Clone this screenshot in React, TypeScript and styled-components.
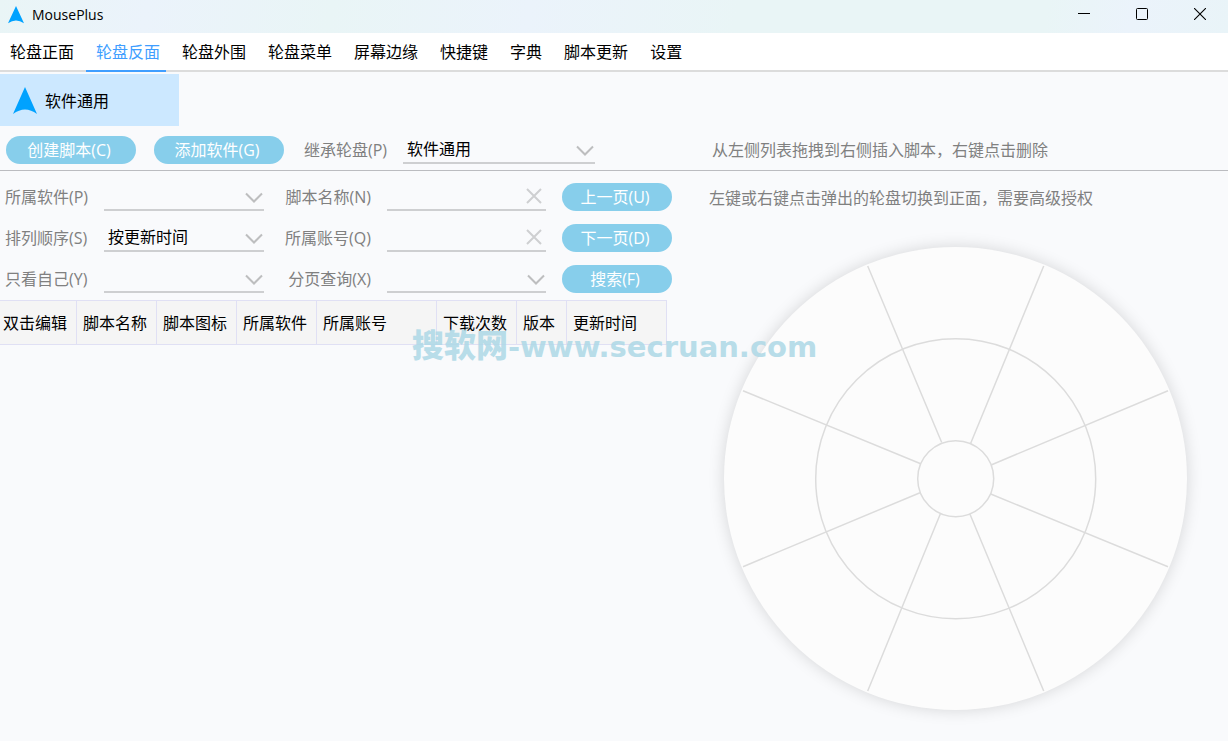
import React from "react";
import styled, { createGlobalStyle } from "styled-components";

const GlobalStyle = createGlobalStyle`
  *, *::before, *::after { box-sizing: border-box; }
  body {
    margin: 0;
    background: #f9fafc;
    color: #000;
    font-family: "Open Sans", "Noto Sans CJK SC", sans-serif;
    font-size: 16px;
    font-weight: 400;
    line-height: 24px;
  }
  button, input, select { font: inherit; color: inherit; }
`;

const Window = styled.div`
  position: relative;
  min-height: 100vh;
  display: flex;
  flex-direction: column;
  overflow: hidden;
`;

const TitleBar = styled.header`
  display: flex;
  align-items: center;
  justify-content: space-between;
  height: 33px;
  background: linear-gradient(100deg, #e9f5f6, #ebf3fb 12%, #e9f5f6 27%, #ebf3fb 43%, #e9f5f6 60%, #e9f5f6 85%, #ebf3fb 92%, #e9f4f8);
`;

const AppName = styled.h1`
  display: flex;
  align-items: center;
  gap: 8px;
  margin: 0;
  padding: 0 0 4px 8px;
  font-size: 14px;
  font-weight: 400;
`;

const WindowControls = styled.div`
  display: flex;
  gap: 2px;
`;

const ControlButton = styled.button`
  display: flex;
  align-items: center;
  justify-content: center;
  width: 56px;
  height: 33px;
  padding: 0 0 5px;
  border: 0;
  background: none;
`;

const Tabs = styled.nav`
  display: flex;
  gap: 6px;
  height: 39px;
  background: #fff;
  box-shadow: inset 0 -2px #dcdcdc;
`;

const Tab = styled.a<{ $active?: boolean }>`
  padding: 7px 6px 0 10px;
  border-bottom: 2px solid ${(p) => (p.$active ? "#409eff" : "transparent")};
  color: ${(p) => (p.$active ? "#409eff" : "#000")};
  text-decoration: none;
  white-space: nowrap;
`;

const SoftwareList = styled.div`
  display: flex;
  padding-top: 2px;
`;

const SoftwareItem = styled.button`
  display: flex;
  align-items: center;
  gap: 8px;
  width: 179px;
  height: 52px;
  padding: 2px 0 0 13px;
  border: 0;
  background: #cce8ff;
`;

const Toolbar = styled.div`
  display: flex;
  align-items: center;
  height: 45px;
  padding: 4px 0 0 6px;
  border-bottom: 1px solid #bbbcc0;
`;

const ToolbarMain = styled.div`
  display: flex;
  flex: 0 0 auto;
  align-items: center;
  gap: 18px;
  width: 706px;
`;

const PillButton = styled.button<{ $width: number }>`
  width: ${(p) => p.$width}px;
  height: 28px;
  padding: 0 4px 0 0;
  border: 0;
  border-radius: 14px;
  background: #87ceeb;
  color: #fff;
  line-height: 28px;
  white-space: nowrap;
`;

const Label = styled.label`
  color: #808080;
  white-space: nowrap;
`;

const LabelledField = styled.div`
  display: flex;
  align-items: center;
  gap: 16px;
  padding-left: 2px;
`;

const FieldFrame = styled.div<{ $width?: number }>`
  display: flex;
  align-items: center;
  width: ${(p) => (p.$width ? `${p.$width}px` : "100%")};
  height: 28px;
  border-bottom: 2px solid #cecfd1;
`;

const SelectFrame = styled(FieldFrame)`
  display: grid;
  grid-template-columns: 1fr 19px;

  svg {
    grid-area: 1 / 2;
    margin-top: 4px;
    pointer-events: none;
  }
`;

const SelectBox = styled.select`
  grid-area: 1 / 1 / 2 / 3;
  width: 100%;
  height: 26px;
  padding: 0 20px 0 4px;
  border: 0;
  outline: 0;
  background: none;
  appearance: none;
`;

const TextInput = styled.input`
  flex: 1;
  min-width: 0;
  height: 26px;
  padding: 0 4px;
  border: 0;
  outline: 0;
  background: none;
`;

const ClearButton = styled.button`
  display: flex;
  padding: 0 4px 0 0;
  border: 0;
  background: none;
`;

const Content = styled.main`
  display: flex;
  flex: 1;
`;

const ScriptPanel = styled.section`
  flex: 0 0 683px;
`;

const FilterForm = styled.form`
  display: grid;
  grid-template-columns: 99px 160px 107px 16px 159px 16px 110px;
  row-gap: 13px;
  align-items: center;
  padding: 12px 0 7px 5px;

  > :nth-child(5n + 4) { grid-column: 5; }
  > :nth-child(5n + 5) { grid-column: 7; }
`;

const FilterLabel = styled(Label)<{ $end?: boolean }>`
  justify-self: ${(p) => (p.$end ? "end" : "start")};
`;

const ScriptTable = styled.table`
  width: 667px;
  border-collapse: separate;
  border-spacing: 0;
  table-layout: fixed;
`;

const HeadCell = styled.th<{ $width: number }>`
  width: ${(p) => p.$width}px;
  height: 45px;
  padding: 0 0 0 6px;
  border: 1px solid #e0e0f4;
  border-left: 0;
  background: #f5f5f5;
  font-weight: 400;
  text-align: left;
  white-space: nowrap;

  &:first-child { padding-left: 3px; }
`;

const WheelPanel = styled.section`
  display: flex;
  flex: 1;
  flex-direction: column;
  padding-top: 15px;
`;

const Hint = styled.p`
  margin: 0;
  color: #808080;
  white-space: nowrap;
`;

const WheelHint = styled(Hint)`
  padding-left: 26px;
`;

const Wheel = styled.svg`
  flex: none;
  align-self: center;
  width: 463px;
  height: 463px;
  margin: 37px 0 30px;
  border-radius: 50%;
  background: #fcfcfc;
  box-shadow: 0 0 16px rgba(0, 0, 0, 0.15);
`;

const Watermark = styled.div`
  position: absolute;
  top: 323px;
  left: 412px;
  color: #add8e6;
  opacity: 0.85;
  font: 700 29px/40px "DejaVu Sans", sans-serif;
  white-space: nowrap;
  pointer-events: none;
`;

const WatermarkName = styled.span`
  font: 900 32px/40px "Noto Sans CJK SC", sans-serif;
`;

const Arrow = ({ width, height }: { width: number; height: number }) => (
  <svg width={width} height={height} viewBox="0 0 22 28" preserveAspectRatio="none" aria-hidden="true">
    <path d="M11 0 L22 27 Q11 18 0 27 Z" fill="#00a2ff" />
  </svg>
);

const Chevron = () => (
  <svg width="18" height="12" viewBox="0 0 18 12" fill="none" stroke="#bdbebf" strokeWidth="2" aria-hidden="true">
    <path d="M1 1.5 L9 9.5 L17 1.5" />
  </svg>
);

const Cross = () => (
  <svg width="16" height="16" viewBox="0 0 16 16" fill="none" stroke="#cecfd1" strokeWidth="2" aria-hidden="true">
    <path d="M1 1 L15 15 M15 1 L1 15" />
  </svg>
);

const Select = ({ id, value = "", width }: { id: string; value?: string; width?: number }) => (
  <SelectFrame $width={width}>
    <SelectBox id={id} defaultValue={value}>
      <option value={value}>{value}</option>
    </SelectBox>
    <Chevron />
  </SelectFrame>
);

const ClearableInput = ({ id }: { id: string }) => (
  <FieldFrame>
    <TextInput id={id} type="text" />
    <ClearButton type="button" aria-label="清除">
      <Cross />
    </ClearButton>
  </FieldFrame>
);

const tabs = ["轮盘正面", "轮盘反面", "轮盘外围", "轮盘菜单", "屏幕边缘", "快捷键", "字典", "脚本更新", "设置"];

const columns = [
  { title: "双击编辑", width: 77 },
  { title: "脚本名称", width: 80 },
  { title: "脚本图标", width: 80 },
  { title: "所属软件", width: 80 },
  { title: "所属账号", width: 120 },
  { title: "下载次数", width: 80 },
  { title: "版本", width: 50 },
  { title: "更新时间", width: 100 },
];

const spokes =
  "M157.7 36 L231.7 212.5 M333.7 36 L260.7 213.3 M458 160.7 L281.7 234.7 M458 336.7 L280.7 264 " +
  "M333.7 461 L260 284.3 M157.7 461 L230.3 284 M33 336.7 L210 262.7 M33 160.7 L210.7 233.7";

export default function App() {
  return (
    <Window>
      <GlobalStyle />
      <TitleBar>
        <AppName>
          <Arrow width={16} height={18} />
          MousePlus
        </AppName>
        <WindowControls>
          <ControlButton aria-label="最小化">
            <svg width="12" height="12" viewBox="0 0 12 12" stroke="#000">
              <path d="M0 5.5 H12" />
            </svg>
          </ControlButton>
          <ControlButton aria-label="最大化">
            <svg width="12" height="12" viewBox="0 0 12 12" fill="none" stroke="#000">
              <rect x="0.5" y="0.5" width="11" height="11" rx="1" />
            </svg>
          </ControlButton>
          <ControlButton aria-label="关闭">
            <svg width="12" height="12" viewBox="0 0 12 12" stroke="#000" strokeWidth="1.1">
              <path d="M0 0 L12 12 M12 0 L0 12" />
            </svg>
          </ControlButton>
        </WindowControls>
      </TitleBar>

      <Tabs>
        {tabs.map((name) => (
          <Tab key={name} href="#" $active={name === "轮盘反面"}>
            {name}
          </Tab>
        ))}
      </Tabs>

      <SoftwareList>
        <SoftwareItem>
          <Arrow width={24} height={28} />
          软件通用
        </SoftwareItem>
      </SoftwareList>

      <Toolbar>
        <ToolbarMain>
          <PillButton $width={130}>创建脚本(C)</PillButton>
          <PillButton $width={130}>添加软件(G)</PillButton>
          <LabelledField>
            <Label htmlFor="inherit">继承轮盘(P)</Label>
            <Select id="inherit" value="软件通用" width={192} />
          </LabelledField>
        </ToolbarMain>
        <Hint>从左侧列表拖拽到右侧插入脚本，右键点击删除</Hint>
      </Toolbar>

      <Content>
        <ScriptPanel>
          <FilterForm>
            <FilterLabel htmlFor="software">所属软件(P)</FilterLabel>
            <Select id="software" />
            <FilterLabel htmlFor="name" $end>脚本名称(N)</FilterLabel>
            <ClearableInput id="name" />
            <PillButton type="button" $width={110}>上一页(U)</PillButton>

            <FilterLabel htmlFor="order">排列顺序(S)</FilterLabel>
            <Select id="order" value="按更新时间" />
            <FilterLabel htmlFor="account" $end>所属账号(Q)</FilterLabel>
            <ClearableInput id="account" />
            <PillButton type="button" $width={110}>下一页(D)</PillButton>

            <FilterLabel htmlFor="mine">只看自己(Y)</FilterLabel>
            <Select id="mine" />
            <FilterLabel htmlFor="page" $end>分页查询(X)</FilterLabel>
            <Select id="page" />
            <PillButton type="button" $width={110}>搜索(F)</PillButton>
          </FilterForm>
          <ScriptTable>
            <thead>
              <tr>
                {columns.map((c) => (
                  <HeadCell key={c.title} $width={c.width}>
                    {c.title}
                  </HeadCell>
                ))}
              </tr>
            </thead>
          </ScriptTable>
        </ScriptPanel>

        <WheelPanel>
          <WheelHint>左键或右键点击弹出的轮盘切换到正面，需要高级授权</WheelHint>
          <Wheel viewBox="14 17 463 463" fill="none" stroke="#dcdcdc" strokeWidth="1.5" aria-label="轮盘">
            <circle cx="245.7" cy="248.7" r="140" />
            <circle cx="245.7" cy="248.7" r="38" />
            <path d={spokes} />
          </Wheel>
        </WheelPanel>
      </Content>

      <Watermark>
        <WatermarkName>搜软网</WatermarkName>-www.secruan.com
      </Watermark>
    </Window>
  );
}
